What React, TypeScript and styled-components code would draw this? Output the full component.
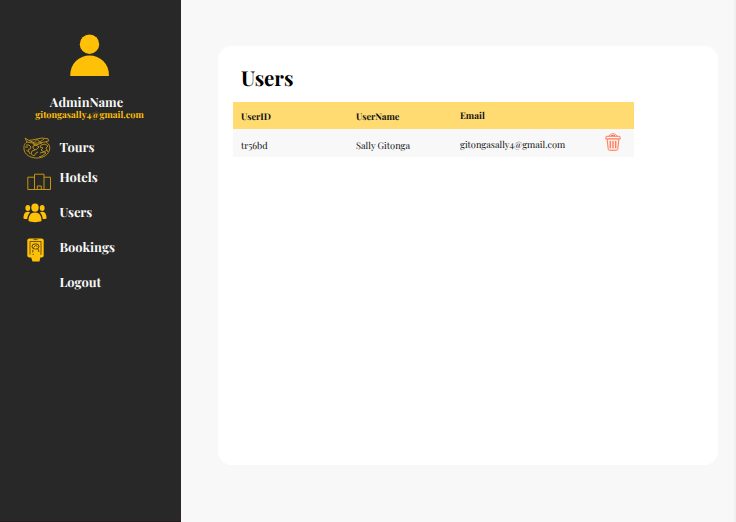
import React from "react";
import styled, { createGlobalStyle } from "styled-components";

const GlobalStyle = createGlobalStyle`
  * { box-sizing: border-box; }
  body {
    margin: 0;
    overflow: hidden;
    background: #f8f8f8;
    font-family: "Playfair Display", "Liberation Serif", serif;
    text-rendering: geometricPrecision;
  }
  svg { display: block; flex: none; }
`;

const Page = styled.div`
  display: flex;
  width: 736px;
  height: 522px;
  background: #f8f8f8;
  border-right: 2px solid #f0f0f0;
`;

const Sidebar = styled.aside`
  display: flex;
  flex-direction: column;
  flex: none;
  width: 181px;
  height: 100%;
  padding-top: 34px;
  background: #282828;
  border-bottom: 1px solid #241a20;
`;

const Profile = styled.div`
  display: flex;
  flex-direction: column;
  align-items: center;
  height: 100px;
  width: 179px;
  white-space: nowrap;
`;

const AdminName = styled.div`
  margin: 21px 6px 0 0;
  font-size: 12.8px;
  line-height: 12px;
  font-weight: 700;
  color: #f7f7f7;
`;

const AdminEmail = styled.div`
  font-size: 9.2px;
  line-height: 13px;
  font-weight: 700;
  color: #ffc107;
`;

const Nav = styled.nav`
  display: flex;
  flex-direction: column;
`;

const NavItem = styled.a<{ $height: number }>`
  display: flex;
  align-items: center;
  height: ${(p) => p.$height}px;
  color: #f7f7f7;
  font-weight: 700;
  line-height: 18px;
`;

const IconSlot = styled.span<{ $left: number; $drop?: number }>`
  flex: none;
  width: 59.4px;
  padding-left: ${(p) => p.$left}px;
  padding-top: ${(p) => p.$drop ?? 0}px;
`;

const NavLabel = styled.span<{ $lift?: number }>`
  font-size: 12.9px;
  padding-bottom: ${(p) => p.$lift ?? 0}px;
`;

const Panel = styled.main`
  width: 500px;
  height: 419px;
  margin: 46px 0 0 37px;
  padding: 20px 15px;
  background: #fff;
  border-radius: 14px;
`;

const Title = styled.h1`
  margin: 0 0 10px 8px;
  font-size: 20.5px;
  line-height: 26px;
  font-weight: 700;
  color: #000;
`;

const Row = styled.div<{ $header?: boolean }>`
  display: grid;
  grid-template-columns: 115px 104px 145px 1fr;
  align-items: center;
  width: 401px;
  height: ${(p) => (p.$header ? 27 : 28)}px;
  padding-left: 8px;
  background: ${(p) => (p.$header ? "#ffdb72" : "#f8f8f8")};
  color: #111;
  font-size: 9.25px;
  font-weight: ${(p) => (p.$header ? 700 : 400)};
  line-height: 14px;
`;

const Cell = styled.span<{ $drop?: number }>`
  padding-top: ${(p) => p.$drop ?? 0}px;
  white-space: nowrap;
`;

const DeleteButton = styled.button`
  width: 16px;
  height: 18px;
  margin-bottom: 2px;
  padding: 0;
  border: 0;
  background: none;
`;

const Avatar = () => (
  <svg width="40" height="42" viewBox="0 0 40 42" fill="#ffc107">
    <circle cx="19.500" cy="10.200" r="9.700" />
    <path d="M.3 42V40.500a19.300 19 0 0 1 38.600 0V42Z" />
  </svg>
);

const ToursIcon = () => (
  <svg width="28" height="22" viewBox="0 0 28 22" fill="none" stroke="#c49612" strokeWidth=".9">
    <path d="M4 5C1 7 .8 9 1 12c.4 5.500 6 9 13 9s12-4 12.700-9c.3-3-.7-5-3.700-7" />
    <path d="m2 1 4 2.500L14 2l5-1 6 .8.7 2-5 1.500-9 1L4 5Z" />
    <path d="m6 3.500 5 2 3-3 3 2.500 4-3M11 5l-1 2 3 1 6-2" />
    <path d="M3 8h3l2 2-1 2-2 1 2 4M3.500 13l2 2M10 9l3-1 3 2-2 2-2 1-2-2ZM12 13l-3 1-1 3 3 2 2-3 2-1M18 8l4-1 3 2-2 2 1 2-3 2-3-2 2-2-3-1ZM17 16l4-1 2 1-4 3-3 1M2 10l3 0M24 13l1 2" />
  </svg>
);

const HotelsIcon = () => (
  <svg width="25" height="18" viewBox="0 0 25 18" fill="none" stroke="#d7a30a" strokeWidth=".9">
    <path d="M.8 16.500V4.200h6.700V1.200h9.500v3h6.500V16.500ZM7.500 4.200V16.500M17 4.200V16.500M10.300 16.500v-3.500h4v3.500" />
  </svg>
);

const UsersIcon = () => (
  <svg width="24" height="20" viewBox="0 0 24 20" fill="#ffc107">
    <ellipse cx="12" cy="4.600" rx="3.700" ry="4.200" />
    <ellipse cx="4.800" cy="5" rx="2.400" ry="2.900" />
    <ellipse cx="19.200" cy="5" rx="2.400" ry="2.900" />
    <path d="M5.500 18c0-5.500 2-8.500 6.500-8.500s6.500 3 6.500 8.500c-3 1.500-10 1.500-13 0Z" />
    <path d="M.5 15.500c0-4 1-6.800 4.300-6.800 1 0 1.800.3 2.300.8C5.500 11 4.500 13 4.300 16c-1.500.1-3-.1-3.800-.5ZM23.500 15.500c0-4-1-6.800-4.300-6.800-1 0-1.800.3-2.300.8 1.600 1.500 2.600 3.500 2.800 6.500 1.500.1 3-.1 3.800-.5Z" />
  </svg>
);

const BookingsIcon = () => (
  <svg width="17" height="24" viewBox="0 0 17 24">
    <rect x=".3" y=".5" width="16.400" height="19" rx="2" fill="#ffc107" />
    <path d="M3 3.500h11v13H3ZM6.500 1.600h4" fill="none" stroke="#4b3b0d" strokeWidth=".8" />
    <ellipse cx="8.500" cy="8.500" rx="3.500" ry="2.700" fill="#ffc107" stroke="#4b3b0d" strokeWidth="1" />
    <path d="m6.500 9.500 2-2 2 1M5.800 12v2.500M11 11l1 3" fill="none" stroke="#4b3b0d" strokeWidth=".9" />
    <path d="M7 12c.5-1 2-.6 2 .8v2l4 1.200c1 .5.800 2 .3 3.500L12.500 23.500h-7L4 19l-1-2.500 1.500-.7 2.500 1.500Z" fill="#ffc107" />
  </svg>
);

const TrashIcon = () => (
  <svg width="16" height="18" viewBox="0 0 16 18" fill="none" stroke="#fb7d5e" strokeWidth="1">
    <path d="M4 3.300C4.500 1.500 6 .8 8 .8s3.500.7 4 2.500M1.200 3.300h13.600l.5 2.700H.7ZM5.800 2.500h4.400" />
    <path fill="#ffe6df" d="M2 6h12l-1.300 10.500c-.1.500-.5.800-1 .8H4.300c-.5 0-.9-.3-1-.8Z" />
    <path d="M5.300 8v7.300M8 8v7.300M10.700 8v7.300" strokeWidth="1.300" />
  </svg>
);

const App: React.FC = () => (
  <>
    <GlobalStyle />
    <Page>
      <Sidebar>
        <Profile>
          <Avatar />
          <AdminName>AdminName</AdminName>
          <AdminEmail>gitongasally4@gmail.com</AdminEmail>
        </Profile>
        <Nav>
          <NavItem $height={28}>
            <IconSlot $left={23}><ToursIcon /></IconSlot>
            <NavLabel>Tours</NavLabel>
          </NavItem>
          <NavItem $height={32}>
            <IconSlot $left={27} $drop={7}><HotelsIcon /></IconSlot>
            <NavLabel>Hotels</NavLabel>
          </NavItem>
          <NavItem $height={37}>
            <IconSlot $left={23}><UsersIcon /></IconSlot>
            <NavLabel>Users</NavLabel>
          </NavItem>
          <NavItem $height={34}>
            <IconSlot $left={27} $drop={3}><BookingsIcon /></IconSlot>
            <NavLabel $lift={1}>Bookings</NavLabel>
          </NavItem>
          <NavItem $height={36}>
            <IconSlot $left={0} />
            <NavLabel>Logout</NavLabel>
          </NavItem>
        </Nav>
      </Sidebar>
      <Panel>
        <Title>Users</Title>
        <Row $header>
          <Cell $drop={2}>UserID</Cell>
          <Cell $drop={2}>UserName</Cell>
          <Cell>Email</Cell>
        </Row>
        <Row>
          <Cell $drop={6}>tr56bd</Cell>
          <Cell $drop={6}>Sally Gitonga</Cell>
          <Cell $drop={3}>gitongasally4@gmail.com</Cell>
          <DeleteButton aria-label="Delete user"><TrashIcon /></DeleteButton>
        </Row>
      </Panel>
    </Page>
  </>
);

export default App;
